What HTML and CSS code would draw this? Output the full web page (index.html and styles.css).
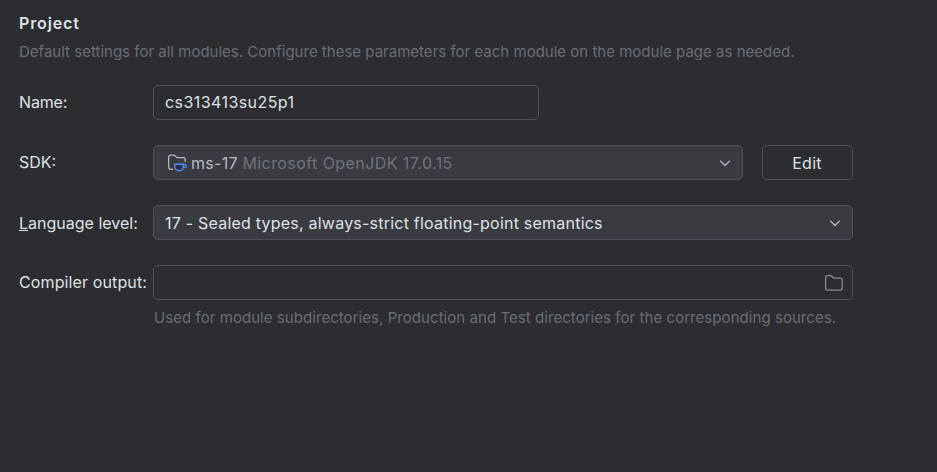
FILE: index.html
```html
<!DOCTYPE html>
<html lang="en">
<head>
<meta charset="utf-8">
<title>Project</title>
<link rel="stylesheet" href="styles.css">
</head>
<body>
<main class="page">
  <h1 class="title">Project</h1>
  <p class="description">Default settings for all modules. Configure these parameters for each module on the module page as needed.</p>
  <form class="form">
    <div class="row">
      <label class="label raised label-name">Name:</label>
      <div class="field field-name"><span class="value raised">cs313413su25p1</span></div>
    </div>
    <div class="row">
      <label class="label raised">SDK:</label>
      <div class="field field-sdk select">
        <svg class="sdk-icon" viewBox="0 0 20 20" fill="none">
          <path d="M6 16.300H3.600a2 2 0 0 1-2-2V4.200a2 2 0 0 1 2-2h3.700l2.700 2.500h6.200a2 2 0 0 1 2 2V9" stroke="#b4b8bf" stroke-width="1.300"/>
          <path d="M7.700 11.300h8.700v2.400a4 4 0 0 1-4 4h-.7a4 4 0 0 1-4-4z" fill="#25324d" stroke="#548af7" stroke-width="1.400"/>
          <path d="M16.400 11.300h1.300a1.500 1.500 0 0 1 0 3.200h-1.500" stroke="#548af7" stroke-width="1.300"/>
        </svg>
        <span class="sdk-name">ms-17</span><span class="sdk-detail">Microsoft OpenJDK 17.0.15</span>
        <svg class="chevron" viewBox="0 0 12 8" fill="none"><path d="M1.300 1.800 6 6.500l4.700-4.700" stroke="#b4b8bf" stroke-width="1.300"/></svg>
      </div>
      <button type="button" class="edit">Edit</button>
    </div>
    <div class="row">
      <label class="label"><span class="mnemonic">L</span>anguage level:</label>
      <div class="field select"><span class="option">17 - Sealed types, always-strict floating-point semantics</span>
        <svg class="chevron" viewBox="0 0 12 8" fill="none"><path d="M1.300 1.800 6 6.500l4.700-4.700" stroke="#b4b8bf" stroke-width="1.300"/></svg>
      </div>
    </div>
    <div class="row">
      <label class="label raised label-output">Compiler output:</label>
      <div class="field">
        <svg class="folder" viewBox="0 0 20 18" fill="none"><path d="M3.600 1.700h3.600L9.800 4h6.400a2 2 0 0 1 2 2v8.100a2 2 0 0 1-2 2H3.600a2 2 0 0 1-2-2V3.700a2 2 0 0 1 2-2z" stroke="#868a91" stroke-width="1.250"/></svg>
      </div>
    </div>
  </form>
  <p class="hint">Used for module subdirectories, Production and Test directories for the corresponding sources.</p>
</main>
</body>
</html>
```
FILE: styles.css
```css
* { box-sizing: border-box; }
html { background: #2b2d30; }
body {
  margin: 0;
  height: 472px;
  overflow: hidden;
  background: #2b2d30;
  border-bottom: 1px solid #2f2a30;
  color: #dfe1e5;
  font: 16px/20px Inter, "Liberation Sans", sans-serif;
}
.page { padding: 13px 0 0 19px; }
.title { margin: 0; font-size: 16px; line-height: 20px; font-weight: 600; letter-spacing: .86px; }
.description, .hint { margin: 0; color: #6a6e75; font-size: 15px; line-height: 20px; white-space: nowrap; }
.description { margin-top: 9px; letter-spacing: .01px; }
.form { display: grid; gap: 25px; width: 834px; margin-top: 23px; }
.row { display: flex; height: 35px; align-items: center; }
.label { width: 134px; flex: none; white-space: nowrap; }
.raised { padding-bottom: 2px; }
.label-name { letter-spacing: -.15px; }
.label-output { letter-spacing: .12px; }
.field {
  display: flex;
  flex: 1;
  align-items: center;
  height: 35px;
  padding: 0 8px 0 11px;
  border: 1px solid #4e5157;
  border-radius: 5px;
  white-space: nowrap;
}
.field-name { flex: none; width: 386px; }
.select { background: #393b40; padding-right: 11px; }
.field-sdk { padding-left: 13px; }
.value { letter-spacing: .43px; }
.option { letter-spacing: .22px; }
.sdk-icon { width: 20px; height: 20px; margin-right: 4px; flex: none; }
.sdk-name { color: #b9bcc2; margin-right: 4.500px; letter-spacing: .3px; }
.sdk-detail { color: #6f737a; letter-spacing: .43px; }
.chevron { width: 12px; height: 8px; margin-left: auto; flex: none; }
.folder { width: 20px; height: 18px; margin-left: auto; flex: none; }
.edit {
  width: 91px;
  height: 35px;
  margin-left: 19px;
  padding: 0 1px 0 0;
  border: 1px solid #4e5157;
  border-radius: 5px;
  background: transparent;
  color: inherit;
  font: inherit;
  letter-spacing: .3px;
}
.mnemonic {
  text-decoration: underline 1px;
  text-underline-offset: 1px;
  text-decoration-skip-ink: none;
}
.hint { margin: 8px 0 0 135px; letter-spacing: .055px; }
```
